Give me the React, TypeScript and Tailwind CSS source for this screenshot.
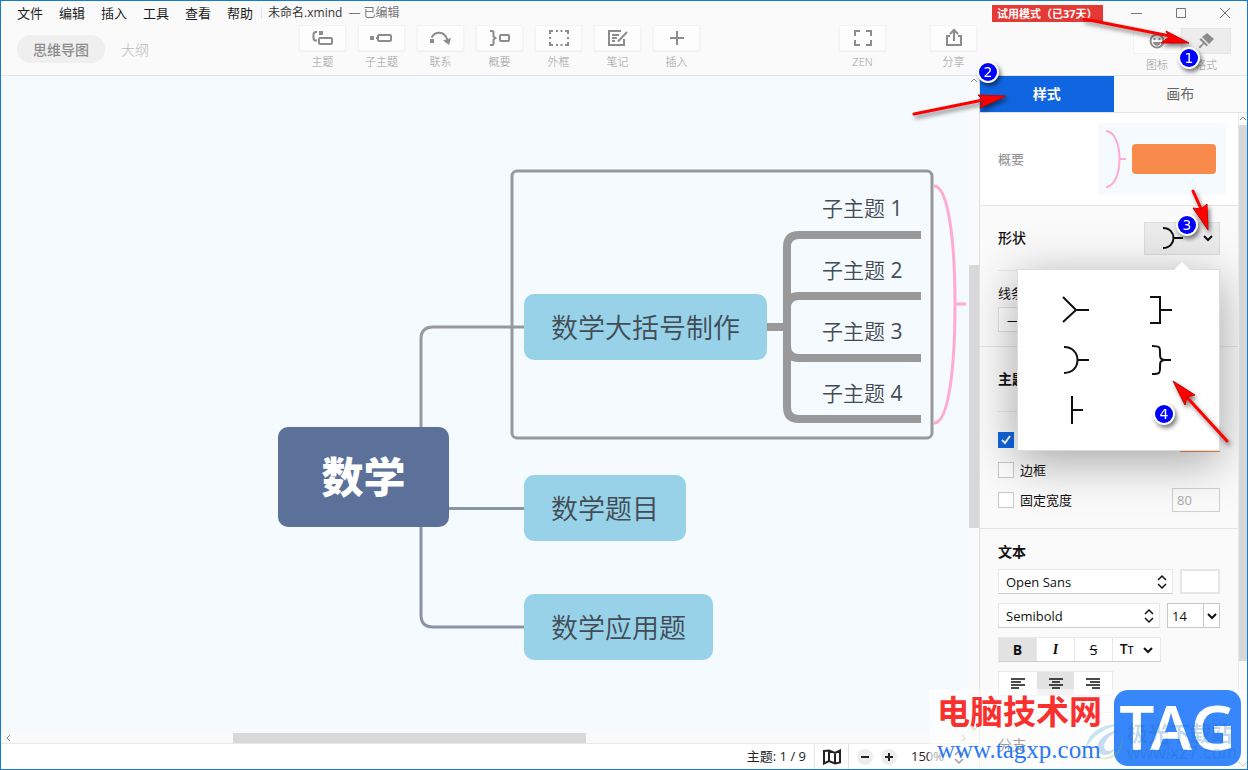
import { ReactNode, useState } from 'react';
import clsx from 'clsx';

type TTool = { label: string; icon: ReactNode };
type TTopic = { title: string; box: string };

const menus = ['文件', '编辑', '插入', '工具', '查看', '帮助'];

const ToolIcon = ({ children }: { children: ReactNode }) => (
  <svg
    className="h-5 w-6"
    viewBox="0 0 24 20"
    fill="none"
    stroke="#8c8c8c"
    strokeWidth={2}
    aria-hidden="true"
  >
    {children}
  </svg>
);

const tools: TTool[] = [
  {
    label: '主题',
    icon: (
      <ToolIcon>
        <path d="M6 4H5Q2.500 4 2.500 6.500V10Q2.500 12.500 5 12.500H6" />
        <rect x="8" y="3" width="4" height="4" fill="#8c8c8c" stroke="none" />
        <rect x="8" y="10" width="13" height="6" rx="1" />
      </ToolIcon>
    )
  },
  {
    label: '子主题',
    icon: (
      <ToolIcon>
        <rect x="0" y="8" width="4" height="4" fill="#8c8c8c" stroke="none" />
        <path d="M6 10H9" />
        <rect x="8" y="7" width="13" height="6" rx="1" />
      </ToolIcon>
    )
  },
  {
    label: '联系',
    icon: (
      <ToolIcon>
        <rect x="1" y="11" width="4" height="4" fill="#8c8c8c" stroke="none" />
        <path d="M2.500 9.500C6 3.500 15 2 18.500 12" />
        <path d="M14 12.500L22 10L20 17Z" fill="#8c8c8c" stroke="none" />
      </ToolIcon>
    )
  },
  {
    label: '概要',
    icon: (
      <ToolIcon>
        <path d="M2 3H4Q5.500 3 5.500 4.500V8.500L7.500 10L5.500 11.500V15.500Q5.500 17 4 17H2" />
        <rect x="12" y="7" width="9" height="6" rx="1" />
      </ToolIcon>
    )
  },
  {
    label: '外框',
    icon: (
      <ToolIcon>
        <path d="M3 6V3H6M9 3H11M13.500 3H15.500M18 3H21V6M21 9V11M21 14V17H18M15.500 17H13.500M11 17H9M6 17H3V14M3 11V9" />
      </ToolIcon>
    )
  },
  {
    label: '笔记',
    icon: (
      <ToolIcon>
        <path d="M15 3H3V17H18V11M6 7H13M6 10H11M6 13H9M21 4L12 13.500" />
      </ToolIcon>
    )
  },
  {
    label: '插入',
    icon: (
      <ToolIcon>
        <path d="M12 3V17M5 10H19" />
      </ToolIcon>
    )
  }
];

const zenTool: TTool = {
  label: 'ZEN',
  icon: (
    <ToolIcon>
      <path d="M4 8V3H9M15 3H20V8M20 12V17H15M9 17H4V12" />
    </ToolIcon>
  )
};

const shareTool: TTool = {
  label: '分享',
  icon: (
    <ToolIcon>
      <path d="M8 8H5V17H19V8H16M12 13V3M8 6L12 2L16 6" />
    </ToolIcon>
  )
};

const topics: TTopic[] = [
  { title: '数学大括号制作', box: 'left-[523px] top-[218px] w-[243px]' },
  { title: '数学题目', box: 'left-[523px] top-[399px] w-[162px]' },
  { title: '数学应用题', box: 'left-[523px] top-[518px] w-[189px]' }
];

const subtopics = [
  { n: 1, box: 'left-[821px] top-[118px]' },
  { n: 2, box: 'left-[821px] top-[180px]' },
  { n: 3, box: 'left-[821px] top-[241px]' },
  { n: 4, box: 'left-[821px] top-[303px]' }
];

const shapes = [
  { name: '折线', path: 'M2 3L15 16L2 28M15 16H28' },
  { name: '方括号', path: 'M2 3H12V29H2M12 16H24' },
  { name: '圆弧', path: 'M3 3C21 3 21 29 3 29M17 16H28' },
  { name: '大括号', path: 'M4 2C13 2 12 4 12 9C12 14 12 15 16 16C12 17 12 18 12 23C12 28 13 30 4 30M15 16H23' },
  { name: '直线', path: 'M11 2V30M11 16H22' }
];

const Chevron = ({ className, d = 'M1 3L5 7L9 3', thin }: { className?: string; d?: string; thin?: boolean }) => (
  <svg
    className={clsx('size-[10px] shrink-0', className)}
    viewBox="0 0 10 10"
    fill="none"
    stroke="currentColor"
    strokeWidth={thin ? 1 : 2}
    aria-hidden="true"
  >
    <path d={d} />
  </svg>
);

const UpDown = ({ className }: { className?: string }) => (
  <svg
    className={clsx('h-4 w-[10px]', className)}
    viewBox="0 0 10 16"
    fill="none"
    stroke="#111"
    strokeWidth={1.5}
    aria-hidden="true"
  >
    <path d="M1 6L5 2L9 6M1 10L5 14L9 10" />
  </svg>
);

const ToolButton = ({ tool }: { tool: TTool }) => (
  <button className="flex w-[47px] flex-col items-center gap-1 text-[11px] leading-[14px] font-light text-[#999]">
    <span className="flex h-[26px] w-full items-center justify-center border border-[#f3f3f3] bg-[#fdfdfd] shadow-xs">
      {tool.icon}
    </span>
    {tool.label}
  </button>
);

const Header = () => (
  <header className="shrink-0 border-b border-[#e4e4e4] bg-[#fafafa]">
    <div className="flex h-6 items-center">
      <nav className="flex gap-4 pl-4 text-[13px] leading-5 text-[#1c1c1c]">
        {menus.map((menu) => (
          <button key={menu}>{menu}</button>
        ))}
      </nav>
      <div className="ml-2 flex items-center gap-[6px] border-l border-[#e4e4e4] pl-[6px] text-[12px] leading-3">
        <span className="text-[#333]">未命名.xmind</span>
        <span className="text-[#777]">— 已编辑</span>
      </div>
      <div className="flex-1" />
      <div className="mr-[27px] h-[17px] w-[111px] bg-[#e53935] pl-[5px] text-[11px] leading-[17px] font-bold whitespace-nowrap text-white">
        试用模式（已37天）
      </div>
      <div className="flex items-center gap-[30px] pr-[15px] text-[#777]">
        {['M1 7.500H12', 'M2.500 2.500H11.500V11.500H2.500Z', 'M2 2L12 12M12 2L2 12'].map((d, i) => (
          <button key={d} aria-label={['最小化', '最大化', '关闭'][i]}>
            <svg className="size-[14px]" viewBox="0 0 14 14" fill="none" stroke="currentColor">
              <path d={d} />
            </svg>
          </button>
        ))}
      </div>
    </div>
    <div className="flex h-[50px] items-start">
      <div className="flex w-[298px] items-center gap-4 pt-[10px] pl-4">
        <button className="h-7 w-[88px] rounded-full bg-[#efefef] text-[14px] font-medium text-[#8c8c8c]">
          思维导图
        </button>
        <button className="text-[14px] font-light text-[#bbb]">大纲</button>
      </div>
      <div className="flex gap-3">
        {tools.map((tool) => (
          <ToolButton key={tool.label} tool={tool} />
        ))}
      </div>
      <div className="flex-1" />
      <div className="flex gap-11">
        <ToolButton tool={zenTool} />
        <ToolButton tool={shareTool} />
      </div>
      <div className="flex w-[270px] justify-end pt-[3px] pr-4 text-[11px] leading-[14px] font-light text-[#999]">
        <button className="flex w-12 flex-col items-center gap-1">
          <span className="flex h-[26px] w-full items-center justify-center border border-[#f3f3f3] bg-[#fdfdfd]">
            <svg className="size-4" viewBox="0 0 16 16" fill="none" stroke="#8c8c8c" strokeWidth={2}>
              <circle cx="8" cy="8" r="6.500" />
              <path d="M4 9C5 14 11 14 12 9Z" fill="#8c8c8c" stroke="none" />
              <path d="M5.500 5V7M10.500 5V7" />
            </svg>
          </span>
          图标
        </button>
        <button className="flex w-[50px] flex-col items-center gap-1">
          <span className="flex h-[26px] w-full items-center justify-center border border-[#e6e6e6] bg-[#ededed]">
            <svg className="size-4" viewBox="0 0 16 16" fill="#8c8c8c">
              <path d="M9 0L16 6L11 11L4 4ZM3 5L10 12L8.500 13.500L6 11L2 15.500L.500 14L5 10L1.500 6.500Z" />
            </svg>
          </span>
          格式
        </button>
      </div>
    </div>
  </header>
);

const MindMap = () => (
  <div className="relative min-w-0 flex-1 overflow-hidden bg-[#f5faff] text-[#434b54]">
    <svg className="absolute top-0 left-0 h-[658px] w-[968px]" viewBox="0 0 968 658" fill="none" strokeWidth={3}>
      <path d="M420 351V263Q420 251 432 251H523" stroke="#999" />
      <path d="M448 432.500H523" stroke="#8795a5" />
      <path d="M420 451V539Q420 551 432 551H523" stroke="#8994a8" />
      <rect x="511" y="95" width="420" height="267" rx="5" stroke="#999" />
      <g stroke="#999" strokeWidth={8}>
        <path d="M766 251H786" />
        <path d="M920 159H798Q786 159 786 171V331Q786 343 798 343H920" />
        <path d="M920 220H798Q786 220 786 232M920 282H798Q786 282 786 270" />
      </g>
      <path d="M933 110C948 110 954 170 954 228C954 290 948 347 933 347M954 228H965" stroke="#ffaad5" />
    </svg>
    <div className="absolute top-[351px] left-[277px] flex h-[100px] w-[171px] items-center justify-center rounded-[10px] bg-[#5b7199] text-[42px] leading-none font-black text-white">
      数学
    </div>
    {topics.map(({ title, box }) => (
      <div
        key={title}
        className={clsx(
          'absolute flex h-[66px] items-center justify-center rounded-[10px] bg-[#97d2e8] text-[27px] leading-none font-[350]',
          box
        )}
      >
        {title}
      </div>
    ))}
    {subtopics.map(({ n, box }) => (
      <div key={n} className={clsx('absolute text-[21px] leading-7 font-[350] whitespace-nowrap', box)}>
        子主题 <span className="font-normal">{n}</span>
      </div>
    ))}
  </div>
);

const StatusBar = () => (
  <footer className="flex h-[25px] shrink-0 items-center justify-end bg-white text-[13px] text-[#222]">
    <span className="pr-2">主题: 1 / 9</span>
    <button className="flex h-full w-[35px] items-center justify-center border-x border-[#e4e4e4]" aria-label="导图">
      <svg className="h-4 w-[18px]" viewBox="0 0 18 16" fill="none" stroke="#222" strokeWidth={2}>
        <path d="M1 2L6 1.500L12 4L17 1.500V13.500L12 14.500L6 12L1 14.500ZM6 2V12M12 4V14" />
      </svg>
    </button>
    {['M4 8H12', 'M4 8H12M8 4V12'].map((d, i) => (
      <button key={d} className="ml-2 rounded-full bg-[#ededed]" aria-label={['缩小', '放大'][i]}>
        <svg className="size-4" viewBox="0 0 16 16" stroke="#222" strokeWidth={2}>
          <path d={d} />
        </svg>
      </button>
    ))}
    <button className="ml-[14px] flex w-[68px] items-center gap-[10px]">
      150%
      <UpDown />
    </button>
  </footer>
);

const Panel = () => {
  const [open] = useState(true);

  return (
    <aside className="flex w-[268px] shrink-0 flex-col border-l border-[#e0e0e0] bg-[#fafafa] text-[13px] leading-5 text-[#111]">
      <div className="flex h-[37px] shrink-0 border-b border-[#e4e4e4] text-[14px]">
        <button className="flex-1 bg-[#1066e0] font-bold text-white">样式</button>
        <button className="flex-1 text-[#666]">画布</button>
      </div>
      <div className="flex min-h-0 flex-1">
        <div className="min-w-0 flex-1 overflow-hidden">
          <section className="flex h-[93px] items-center justify-between border-b border-[#e4e4e4] bg-white pr-3 pl-[18px]">
            <span className="text-[#8c8c8c]">概要</span>
            <div className="flex h-[72px] w-32 items-center justify-between rounded bg-[#f5faff] pr-[10px] pl-2">
              <svg className="h-[60px] w-5" viewBox="0 0 20 60" fill="none" stroke="#ffaad5" strokeWidth={2}>
                <path d="M0 2C18 3 18 57 0 58M14 30H20" />
              </svg>
              <div className="h-[30px] w-[84px] rounded bg-[#f88b4b]" />
            </div>
          </section>

          <section className="border-b border-[#e4e4e4] px-[18px]">
            <div className="relative flex h-[65px] items-center justify-between border-b border-[#e8e8e8] text-[14px] font-medium">
              形状
              <button
                className="flex h-[33px] w-[76px] items-center justify-between border border-[#ddd] bg-[#ebebeb] pr-[6px] pl-4"
                aria-label="形状"
              >
                <svg className="h-6 w-[22px]" viewBox="0 0 22 24" fill="none" stroke="#111" strokeWidth={2}>
                  <path d="M2 2C16 2 16 22 2 22M13 12H22" />
                </svg>
                <Chevron />
              </button>
              {open && (
                <div className="absolute top-[63px] right-0 z-10 h-[182px] w-[203px] border border-[#ddd] bg-white pt-6 pr-[41px] pl-[43px] shadow-[0_10px_45px_rgba(0,0,0,0.35)]">
                  <svg className="absolute -top-2 right-[29px] h-2 w-4" viewBox="0 0 16 8" fill="#fff">
                    <path d="M0 8L8 0L16 8Z" />
                  </svg>
                  <div className="grid grid-cols-2 gap-x-14 gap-y-[18px]">
                    {shapes.map((shape) => (
                      <button key={shape.name} aria-label={shape.name}>
                        <svg className="h-8 w-[30px]" viewBox="0 0 30 32" fill="none" stroke="#111" strokeWidth={2}>
                          <path d={shape.path} />
                        </svg>
                      </button>
                    ))}
                  </div>
                </div>
              )}
            </div>
            <div className="flex h-[75px] flex-col pt-3">
              <label htmlFor="line">线条</label>
              <select
                id="line"
                className="mt-1 h-[25px] w-20 appearance-none border border-[#e2e2e2] bg-white px-2"
              >
                <option>—</option>
              </select>
            </div>
          </section>

          <section className="border-b border-[#e4e4e4] px-[18px]">
            <h2 className="flex h-[65px] items-center border-b border-[#e8e8e8] text-[14px] font-bold">主题</h2>
            <div className="flex flex-col py-[13px]">
              <div className="flex h-[30px] items-center justify-between">
                <label className="flex items-center gap-[6px]">
                  <span className="grid size-4">
                    <input
                      type="checkbox"
                      defaultChecked
                      className="col-start-1 row-start-1 size-4 appearance-none bg-[#1066e0]"
                    />
                    <svg
                      className="pointer-events-none col-start-1 row-start-1 size-4"
                      viewBox="0 0 16 16"
                      fill="none"
                      stroke="#fff"
                      strokeWidth={2}
                    >
                      <path d="M4 8L7 11L12 4" />
                    </svg>
                  </span>
                  填充
                </label>
                <button className="h-6 w-10 bg-[#f88b4b]" aria-label="填充颜色" />
              </div>
              <label className="flex h-[30px] items-center gap-[6px]">
                <input type="checkbox" className="size-4 appearance-none border border-[#c8c8c8] bg-white" />
                边框
              </label>
              <div className="flex h-[30px] items-center justify-between">
                <label className="flex items-center gap-[6px]">
                  <input type="checkbox" className="size-4 appearance-none border border-[#c8c8c8] bg-white" />
                  固定宽度
                </label>
                <input
                  className="h-6 w-12 border border-[#d0d0d0] bg-[#fafafa] px-1 text-[#aaa]"
                  defaultValue="80"
                  disabled
                  aria-label="宽度"
                />
              </div>
            </div>
          </section>

          <section className="px-[18px]">
            <h2 className="flex h-10 items-center pt-[6px] text-[14px] font-bold">文本</h2>
            <div className="flex flex-col gap-[9px] border-b border-[#e8e8e8] pb-4">
              <div className="flex gap-[7px]">
                <div className="grid flex-1 items-center">
                  <select
                    className="col-start-1 row-start-1 h-[25px] appearance-none border border-[#e8e8e8] border-b-[#ccc] bg-white px-[7px]"
                    aria-label="字体"
                  >
                    <option>Open Sans</option>
                  </select>
                  <UpDown className="pointer-events-none col-start-1 row-start-1 mr-[6px] justify-self-end" />
                </div>
                <button className="h-[25px] w-10 border-2 border-[#e6e6e6] bg-white" aria-label="文本颜色" />
              </div>
              <div className="flex gap-[7px]">
                <div className="grid flex-1 items-center">
                  <select
                    className="col-start-1 row-start-1 h-[25px] appearance-none border border-[#e8e8e8] border-b-[#ccc] bg-white px-[7px]"
                    aria-label="字重"
                  >
                    <option>Semibold</option>
                  </select>
                  <UpDown className="pointer-events-none col-start-1 row-start-1 mr-[6px] justify-self-end" />
                </div>
                <div className="flex h-[25px] w-[53px] border border-[#c8c8c8] bg-white">
                  <input className="w-[35px] min-w-0 pl-1" defaultValue="14" aria-label="字号" />
                  <button
                    className="flex flex-1 items-center justify-center border-l border-[#c8c8c8]"
                    aria-label="选择字号"
                  >
                    <Chevron />
                  </button>
                </div>
              </div>
              <div className="flex h-[25px] w-[163px] divide-x divide-[#e8e8e8] border border-[#e8e8e8] border-b-[#ccc] bg-white text-[14px]">
                <button className="w-[38px] bg-[#e2e2e2] font-bold">B</button>
                <button className="w-[38px] font-serif font-bold italic">I</button>
                <button className="w-[38px] line-through">S</button>
                <button className="flex flex-1 items-center justify-center gap-[10px]" aria-label="大小写">
                  <span className="font-semibold">
                    T<span className="text-[10px]">T</span>
                  </span>
                  <Chevron />
                </button>
              </div>
              <div className="flex h-[25px] w-[115px] border border-[#e8e8e8] bg-white">
                {['M1 2H15M1 5H11M1 8H15M1 11H9', 'M1 2H15M4 5H12M1 8H15M4 11H12', 'M1 2H15M5 5H15M1 8H15M7 11H15'].map(
                  (d, i) => (
                    <button
                      key={d}
                      className={clsx('flex flex-1 items-center justify-center', i === 1 && 'bg-[#e2e2e2]')}
                      aria-label={['左对齐', '居中', '右对齐'][i]}
                    >
                      <svg className="h-[13px] w-4" viewBox="0 0 16 13" stroke="#111" strokeWidth={1.5}>
                        <path d={d} />
                      </svg>
                    </button>
                  )
                )}
              </div>
            </div>
          </section>

          <section className="flex h-16 items-center justify-between px-[18px] text-[14px] text-[#111]">
            分支
            <div className="flex w-[76px] items-center justify-between pr-[6px] pl-4">
              <svg className="h-6 w-[22px]" viewBox="0 0 22 24" fill="none" stroke="#111" strokeWidth={2}>
                <path d="M0 12H8M18 2H12Q8 2 8 6V18Q8 22 12 22H18" />
              </svg>
              <Chevron />
            </div>
          </section>
        </div>
        <div className="flex w-[9px] shrink-0 flex-col items-center border-l border-[#e8e8e8] text-[#888]">
          <Chevron thin className="my-px" d="M2 6L5 3L8 6" />
          <div className="h-[536px] w-full bg-[#d8d8d8]" />
          <div className="flex-1" />
          <Chevron thin />
        </div>
      </div>
    </aside>
  );
};

const Watermark = () => (
  <div className="pointer-events-none absolute right-0 bottom-0 z-20 flex h-20 w-[318px] gap-[11px] bg-white/60 pt-px pl-2">
    <div className="flex w-[166px] flex-col whitespace-nowrap">
      <span className="text-[33px] leading-[44px] font-bold text-[#f8302e]">电脑技术网</span>
      <span className="font-['Liberation_Serif',serif] text-[25px] leading-[32px] text-[#2b78f5]">
        www.tagxp.com
      </span>
    </div>
    <div className="flex h-[76px] w-[127px] items-center justify-center rounded-[14px] bg-[#2c80fb]/95 pb-1 font-['Noto_Sans',sans-serif] text-[62px] leading-none font-semibold text-white">
      TAG
    </div>
    <div className="absolute top-8 right-[10px] flex items-center gap-px text-[#1268b8] opacity-25">
      <svg className="h-10 w-[42px]" viewBox="0 0 42 40">
        <path d="M38 3C16 2 2 14 2 28C8 15 20 7 38 3Z" fill="#2b9bd6" />
        <path d="M39 8C22 10 11 20 14 30C18 37 29 34 31 27C27 31 21 31 20 26C20 18 29 12 39 8Z" fill="#2b78d6" />
        <path d="M8 35C20 41 39 34 38 14C42 34 26 44 8 35Z" fill="#7cbf3a" />
      </svg>
      <div className="flex flex-col whitespace-nowrap">
        <span className="text-[21px] leading-6 font-bold">极光下载站</span>
        <span className="font-['Liberation_Sans',sans-serif] text-[18px] leading-4">www.xz7.com</span>
      </div>
    </div>
  </div>
);

const steps = [
  { n: 1, x: 289, y: 57 },
  { n: 2, x: 88, y: 71 },
  { n: 3, x: 287, y: 224 },
  { n: 4, x: 264, y: 413 }
];

// Numbered walkthrough marks, pinned to the panel side of the window.
const Annotations = () => (
  <svg
    className="pointer-events-none absolute top-0 right-0 z-20 h-[460px] w-[347px] drop-shadow-[2px_3px_2px_rgba(0,0,0,0.5)]"
    viewBox="0 0 347 460"
  >
    <path
      d="M184 18L270 35M14 113L83 99M293 190L303 212M327 440L284 393"
      stroke="#f00"
      strokeWidth={3}
      strokeLinecap="round"
    />
    <g fill="#f00" stroke="#c00" strokeWidth={1}>
      <path d="M289 42L266 30L269 36L261 42Z" />
      <path d="M106 95L78 94L83 99L80 107Z" />
      <path d="M308 229L293 207L301 208L307 203Z" />
      <path d="M273 380L285 404L287 396L295 394Z" />
    </g>
    {steps.map(({ n, x, y }) => (
      <g key={n}>
        <circle cx={x} cy={y} r="11" fill="#fff" />
        <circle cx={x} cy={y} r="9" fill="#00f" />
        <text
          x={x}
          y={y + 5}
          textAnchor="middle"
          fill="#fff"
          className="font-['DejaVu_Sans',sans-serif] text-[14px]"
        >
          {n}
        </text>
      </g>
    ))}
  </svg>
);

const App = () => {
  return (
    <div className="relative flex h-screen flex-col overflow-hidden border border-[#1a7bc8] bg-[#fafafa] font-['Open_Sans','Noto_Sans_CJK_SC',sans-serif]">
      <Header />
      <div className="flex min-h-0 flex-1">
        <main className="flex min-w-0 flex-1 flex-col">
          <div className="flex min-h-0 flex-1">
            <MindMap />
            <div className="flex w-[10px] shrink-0 flex-col items-center text-[#888]">
              <Chevron thin d="M2 6L5 3L8 6" />
              <div className="mt-[179px] h-[263px] w-full bg-[#d8d8d8]" />
              <div className="flex-1" />
              <Chevron thin />
            </div>
          </div>
          <div className="flex h-[11px] shrink-0 items-center border-b border-[#e8e8e8] pr-[10px] text-[#888]">
            <Chevron thin className="ml-[3px]" d="M6 2L3 5L6 8" />
            <div className="ml-[219px] h-full w-[353px] bg-[#d8d8d8]" />
            <div className="flex-1" />
            <Chevron thin d="M3 2L6 5L3 8" />
          </div>
          <StatusBar />
        </main>
        <Panel />
      </div>
      <Watermark />
      <Annotations />
    </div>
  );
};

export default App;
